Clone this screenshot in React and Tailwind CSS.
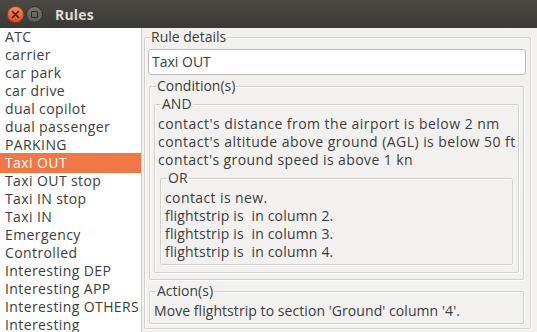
import React from 'react';

const rules = [
  'ATC',
  'carrier',
  'car park',
  'car drive',
  'dual copilot',
  'dual passenger',
  'PARKING',
  'Taxi OUT',
  'Taxi OUT stop',
  'Taxi IN stop',
  'Taxi IN',
  'Emergency',
  'Controlled',
  'Interesting DEP',
  'Interesting APP',
  'Interesting OTHERS',
  'Interesting',
];

// Qt-like etched group box: grey frame with a white line offset by one pixel
function Group({ title, className = '', legendClass = 'ml-[2px]', children }) {
  return (
    <fieldset
      className={`min-w-0 border border-[#d3d0cb] rounded-[2px] shadow-[inset_1px_1px_0_#ffffff,1px_1px_0_#ffffff] ${className}`}
    >
      <legend className={`px-[1px] leading-[18px] ${legendClass}`}>{title}</legend>
      {children}
    </fieldset>
  );
}

function TitleBar() {
  return (
    <div className="h-[28px] flex items-center bg-gradient-to-b from-[#4a4944] to-[#3a3935] pl-[7px] shrink-0">
      <div className="w-[17px] h-[17px] rounded-full bg-gradient-to-b from-[#f58c63] to-[#e0471d] border border-[#a83a17] flex items-center justify-center">
        <svg width="9" height="9" viewBox="0 0 9 9">
          <path d="M1.5 1.5 L7.5 7.5 M7.5 1.5 L1.5 7.5" stroke="#3b2218" strokeWidth="1.6" strokeLinecap="round" />
        </svg>
      </div>
      <div className="ml-[2px] w-[17px] h-[17px] rounded-full bg-gradient-to-b from-[#77756f] to-[#5c5a55] border border-[#2f2e2b] flex items-center justify-center">
        <div className="w-[7px] h-[7px] border border-[#2e2d2a] rounded-[1px]" />
      </div>
      <span className="ml-[12px] text-[14px] font-bold text-[#dfdbd2] tracking-[0.2px]">Rules</span>
    </div>
  );
}

export default function App() {
  return (
    <div
      className="w-[537px] h-[332px] flex flex-col overflow-hidden bg-[#f2f1f0] text-[#3c3c3c] text-[14px]"
      style={{ fontFamily: '"Open Sans", "DejaVu Sans", sans-serif' }}
    >
      <TitleBar />
      <div className="flex flex-1 min-h-0">
        <ul className="w-[142px] shrink-0 bg-white border-r border-[#cfccc7] overflow-hidden tracking-[0.4px]">
          {rules.map((r, i) =>
            i === 7 ? (
              <li key={r} className="relative -my-[1px] h-[20px] leading-[20px] pl-[5px] bg-[#f07746] text-white whitespace-nowrap">
                {r}
              </li>
            ) : (
              <li key={r} className="h-[18px] leading-[18px] pl-[5px] whitespace-nowrap">
                {r}
              </li>
            )
          )}
        </ul>
        <div className="flex-1 min-w-0 pl-[2px] pr-[6px] pb-[5px]">
          <Group title="Rule details" className="pl-[3px] pr-[4px] pb-[4px]">
            <div className="mt-[3px] h-[26px] bg-white border border-[#bdbab4] rounded-[3px] pl-[3px] leading-[24px]">
              Taxi OUT
            </div>
            <Group title="Condition(s)" className="mt-[2px] ml-[1px] mr-[2px] pl-[4px] pr-[4px] pb-[6px]">
              <Group title="AND" legendClass="ml-[3px]" className="pl-[3px] pr-[5px] pb-[7px]">
                <div className="mt-[2px] leading-[18px] whitespace-nowrap">
                  <div className="tracking-[0.47px]">contact's distance from the airport is below 2 nm</div>
                  <div className="tracking-[0.46px]">contact's altitude above ground (AGL) is below 50 ft</div>
                  <div className="tracking-[0.4px]">contact's ground speed is above 1 kn</div>
                </div>
                <Group title="OR" className="ml-[2px] pl-[4px] pb-[3px]">
                  <div className="mt-[2px] leading-[18px] whitespace-pre">
                    <div className="tracking-[0.4px]">contact is new.</div>
                    <div className="tracking-[0.18px]">flightstrip is  in column 2.</div>
                    <div className="tracking-[0.18px]">flightstrip is  in column 3.</div>
                    <div className="tracking-[0.18px]">flightstrip is  in column 4.</div>
                  </div>
                </Group>
              </Group>
            </Group>
            <Group title="Action(s)" className="mt-[2px] ml-[1px] mr-[2px] pl-[4px] pb-[3px]">
              <div className="mt-[2px] leading-[18px] whitespace-nowrap tracking-[0.06px]">
                Move flightstrip to section 'Ground' column '4'.
              </div>
            </Group>
          </Group>
        </div>
      </div>
    </div>
  );
}
